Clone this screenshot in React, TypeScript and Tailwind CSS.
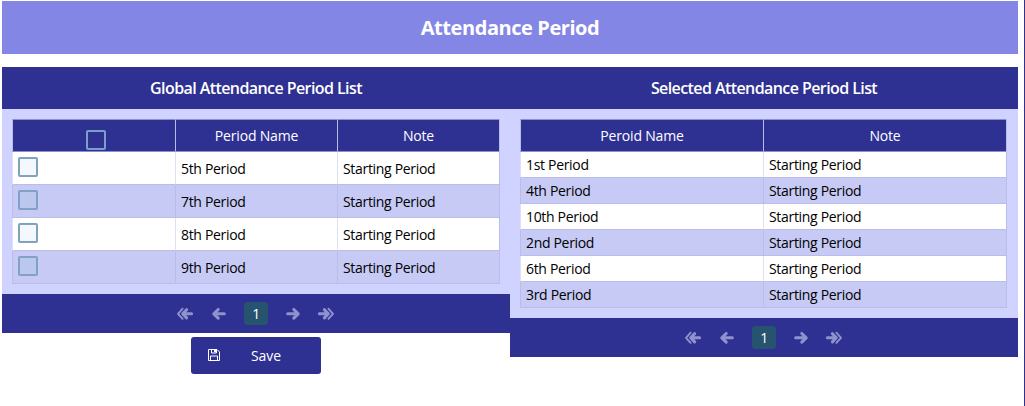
import React from 'react';

type Row = { name: string; note: string };

const globalRows: Row[] = ['5th Period', '7th Period', '8th Period', '9th Period'].map((name) => ({
  name,
  note: 'Starting Period',
}));

const selectedRows: Row[] = ['1st Period', '4th Period', '10th Period', '2nd Period', '6th Period', '3rd Period'].map(
  (name) => ({ name, note: 'Starting Period' }),
);

function Arrow({ double = false, flip = false }: { double?: boolean; flip?: boolean }) {
  return (
    <svg
      width="18"
      height="14"
      viewBox="0 0 18 14"
      fill="none"
      stroke="#8f92cc"
      strokeLinecap="round"
      strokeLinejoin="round"
      className={flip ? '-scale-x-100' : ''}
    >
      {double ? (
        <>
          <path d="M6.600 1.700 2 6.800l4.600 5.100" strokeWidth="1.900" />
          <path d="M10.600 2.700 6.700 6.800l3.900 4.100M7.200 6.800h8.400" strokeWidth="3.100" />
        </>
      ) : (
        <path d="M8.200 2.500 3.800 6.800l4.400 4.300M4.300 6.800h10" strokeWidth="3.100" />
      )}
    </svg>
  );
}

function Paginator() {
  return (
    <div className="flex h-[39px] items-center justify-center bg-[#2e3192] pr-px">
      <Arrow double />
      <div className="ml-4">
        <Arrow />
      </div>
      <div className="ml-4 flex h-[23px] w-6 items-center justify-center rounded-[3px] bg-[#26546f] text-[14px] leading-none font-medium text-white">
        1
      </div>
      <div className="ml-4">
        <Arrow flip />
      </div>
      <div className="ml-[15px]">
        <Arrow double flip />
      </div>
    </div>
  );
}

function CheckBox({ tone }: { tone: string }) {
  return <div role="checkbox" aria-checked="false" className={`size-5 shrink-0 rounded-[2px] border-2 ${tone}`} />;
}

function HeadCell({ children }: { children: React.ReactNode }) {
  return (
    <div className="flex h-[33px] items-center justify-center border-y border-l border-t-[#8d90c8] border-b-[#8d90c8] border-l-[#b9bbe6] bg-[#2e3192] font-medium tracking-[-0.18px] text-white">
      {children}
    </div>
  );
}

function Panel({ title, children }: { title: string; children: React.ReactNode }) {
  return (
    <section className="w-[508px]">
      <h2 className="flex h-[42px] items-center justify-center bg-[#2e3192] text-[16px] font-semibold tracking-[-0.58px] text-white">
        {title}
      </h2>
      <div className="bg-[#d0d2ff] p-[10px]">{children}</div>
      <Paginator />
    </section>
  );
}

export default function App() {
  return (
    <div className="flex h-[406px] w-[1025px] overflow-hidden border-r border-[#2e3192] bg-white pt-px pl-0.5 font-['Open_Sans',sans-serif] text-[14px] leading-5 tracking-[-0.32px] whitespace-nowrap text-black">
      <main className="w-[1016px]">
        <h1 className="flex h-[53px] items-center justify-center bg-[#8486e6] text-[20px] font-bold tracking-[-0.43px] text-white">
          Attendance Period
        </h1>
        <div className="mt-[13px] flex items-start">
          <div>
            <Panel title="Global Attendance Period List">
              <div className="w-[488px] border-r border-[#babde9]">
                <div className="grid grid-cols-[163px_162px_1fr]">
                  <HeadCell>
                    <div className="ml-1 pt-[9px]">
                      <CheckBox tone="border-[#7c9ecb] bg-[#2e3192]" />
                    </div>
                  </HeadCell>
                  <HeadCell>Period Name</HeadCell>
                  <HeadCell>Note</HeadCell>
                </div>
                {globalRows.map((row, i) => {
                  const odd = i % 2 === 1;
                  const cell = 'flex h-[33px] border-b border-l pl-[5px] border-b-[#babde9] ' + (odd ? 'border-l-[#babde9] bg-[#c6caf5]' : 'border-l-[#dfe1f3] bg-white');
                  return (
                    <div key={row.name} className="grid grid-cols-[163px_162px_1fr]">
                      <div className={`${cell} items-start pt-[5px]`}>
                        <CheckBox tone={odd ? 'border-[#80a2c6] bg-[#bcc7ee]' : 'border-[#7da3bd] bg-[#f4f7fb]'} />
                      </div>
                      <div className={`${cell} items-center pt-0.5`}>{row.name}</div>
                      <div className={`${cell} items-center pt-0.5`}>{row.note}</div>
                    </div>
                  );
                })}
              </div>
            </Panel>
            <button className="mt-1 ml-[189px] flex h-[37px] w-[130px] items-center rounded-[3px] bg-[#2e3192] pl-[17px] tracking-[-0.1px] text-white">
              <svg width="12" height="12" viewBox="0 0 12 12" fill="none" stroke="currentColor" className="-mt-px">
                <path d="M.5.5h8.500l2.500 2.500v8.500H.5z" />
                <path d="M3.500.5v3.500h5V.5M2.500 11.500V7h7v4.500" />
                <path d="M6.500 1v2h1V1" />
              </svg>
              <span className="ml-[31px]">Save</span>
            </button>
          </div>
          <Panel title="Selected Attendance Period List">
            <div className="w-[487px] border-r border-[#babde9]">
              <div className="grid grid-cols-[243px_1fr]">
                <HeadCell>Peroid Name</HeadCell>
                <HeadCell>Note</HeadCell>
              </div>
              {selectedRows.map((row, i) => {
                const cell = 'flex h-[26px] items-center border-b border-l pl-[5px] border-b-[#babde9] ' + (i % 2 === 1 ? 'border-l-[#babde9] bg-[#c6caf5]' : 'border-l-[#dfe1f3] bg-white');
                return (
                  <div key={row.name} className="grid grid-cols-[243px_1fr]">
                    <div className={cell}>{row.name}</div>
                    <div className={cell}>{row.note}</div>
                  </div>
                );
              })}
            </div>
          </Panel>
        </div>
      </main>
    </div>
  );
}
